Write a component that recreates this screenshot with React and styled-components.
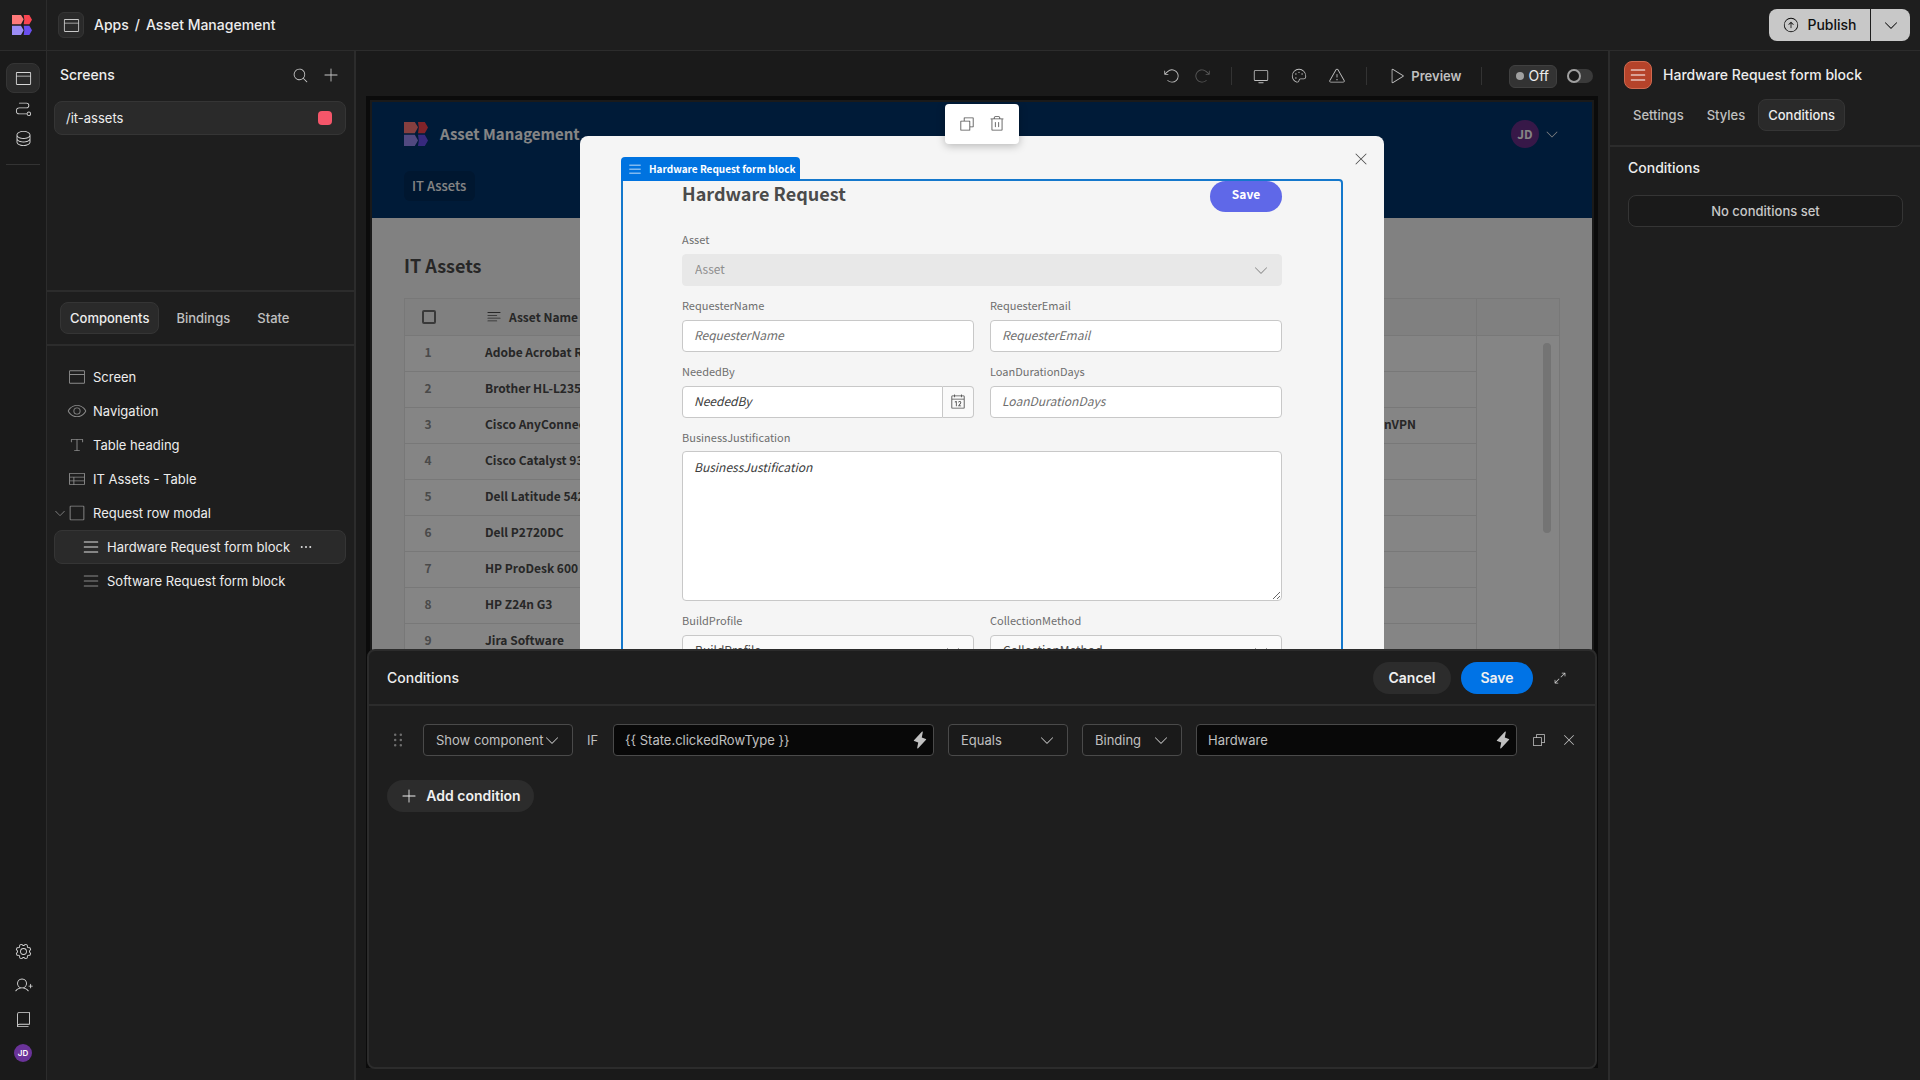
import { useState } from 'react'
import styled, { createGlobalStyle } from 'styled-components'
import {
   PiArrowClockwiseLight,
   PiArrowCircleUpLight,
   PiArrowCounterClockwiseLight,
   PiArrowsOutSimpleLight,
   PiBookLight,
   PiBrowserLight,
   PiCalendarLight,
   PiCaretDownLight,
   PiCopyLight,
   PiDatabaseLight,
   PiDotsSixVerticalBold,
   PiDotsThreeBold,
   PiEyeLight,
   PiGearLight,
   PiLightningFill,
   PiListLight,
   PiMagnifyingGlassLight,
   PiMonitorLight,
   PiPaletteLight,
   PiPathLight,
   PiPlayLight,
   PiPlusLight,
   PiSquareLight,
   PiTableLight,
   PiTextAlignLeftLight,
   PiTextTLight,
   PiTrashLight,
   PiUserPlusLight,
   PiWarningLight,
   PiXLight,
} from 'react-icons/pi'

const GlobalStyle = createGlobalStyle`
*, *::before { box-sizing: border-box; }
body {
   margin: 0;
   background: #1a1a1a;
   color: #ededed;
   font-family: Inter, sans-serif;
   font-size: 13px;
   line-height: 20px;
   overflow: hidden;
}
h1, h2, h3, p, ul { margin: 0; padding: 0; }
ul { list-style: none; }
button, input, select, textarea { font: inherit; color: inherit; }
button {
   border: 0;
   padding: 0;
   background: none;
   cursor: pointer;
}
svg { display: block; flex: none; }
`

/* ---------- shell ---------- */

const Page = styled.div`
   display: grid;
   grid-template-columns: 47px 309px 1fr 312px;
   grid-template-rows: 51px 1fr;
   height: 100vh;
`
const LogoCell = styled.div`
   display: flex;
   align-items: center;
   padding-left: 12px;
   background: #1e1e1e;
   border-right: 1px solid #2c2c2c;
   border-bottom: 1px solid #2c2c2c;
`
const TopBar = styled.header`
   grid-column: 2 / -1;
   display: flex;
   align-items: center;
   justify-content: space-between;
   padding: 0 10px 0 11px;
   background: #1e1e1e;
   border-bottom: 1px solid #2c2c2c;
`
const Breadcrumbs = styled.nav`
   display: flex;
   align-items: center;
   font-size: 14px;
   font-weight: 500;
   a {
      color: #ededed;
      text-decoration: none;
   }
   span { margin: 0 6px; }
`
const AppIcon = styled.div`
   display: flex;
   align-items: center;
   justify-content: center;
   width: 26px;
   height: 26px;
   margin-right: 10px;
   color: #c8c8c8;
   background: #2a2a2a;
   border: 1px solid #353535;
   border-radius: 6px;
`
const PublishGroup = styled.div`
   display: flex;
   gap: 1px;
   height: 32px;
   border-radius: 8px;
   overflow: hidden;
`
const PublishButton = styled.button`
   display: flex;
   align-items: center;
   justify-content: center;
   gap: 7px;
   width: ${(p) => (p.$narrow ? '39px' : '101px')};
   color: #101010;
   background: #c8c8c8;
   font-size: 14px;
   font-weight: 500;
`
const Rail = styled.nav`
   display: flex;
   flex-direction: column;
   align-items: center;
   padding: 12px 0 10px;
   border-right: 1px solid #2c2c2c;
`
const RailButton = styled.button`
   display: flex;
   align-items: center;
   justify-content: center;
   width: 34px;
   height: ${(p) => (p.$tall ? '34px' : '30px')};
   color: #d8d8d8;
   border-radius: 8px;
   border: 1px solid ${(p) => (p.$active ? '#353535' : 'transparent')};
   background: ${(p) => (p.$active ? '#2a2a2a' : 'none')};
`
const RailLine = styled.hr`
   width: 34px;
   height: 1px;
   margin: 11px 0 auto;
   border: 0;
   background: #333333;
`
const RailAvatar = styled.span`
   width: 18px;
   height: 18px;
   border-radius: 50%;
   background: #6a3399;
   color: #ffffff;
   font-size: 8px;
   font-weight: 600;
   line-height: 18px;
   text-align: center;
`

/* ---------- left and right panels ---------- */

const Panel = styled.aside`
   background: #1e1e1e;
   border-left: ${(p) => (p.$side === 'right' ? '2px solid #2c2c2c' : '0')};
   border-right: ${(p) => (p.$side === 'left' ? '2px solid #2c2c2c' : '0')};
`
const ScreensSection = styled.section`
   height: 241px;
   padding: 0 8px 0 7px;
   border-bottom: 2px solid #2c2c2c;
`
const ScreensHead = styled.div`
   display: flex;
   align-items: center;
   height: 48px;
   margin-bottom: 2px;
   padding: 0 6px;
   gap: 13px;
   color: #b0b0b0;
`
const PanelTitle = styled.h3`
   flex: 1;
   color: #ededed;
   font-size: 14px;
   font-weight: 500;
`
const ScreenRow = styled.button`
   display: flex;
   align-items: center;
   justify-content: space-between;
   width: 100%;
   height: 34px;
   padding: 0 13px 0 11px;
   background: #2a2a2a;
   border: 1px solid #353535;
   border-radius: 8px;
`
const RoleDot = styled.span`
   width: 14px;
   height: 14px;
   border-radius: 4px;
   background: #f5566a;
`
const Tabs = styled.div`
   display: flex;
   gap: ${(p) => p.$gap};
   padding: ${(p) => p.$pad};
   border-bottom: 2px solid #2c2c2c;
`
const Tab = styled.button`
   height: 32px;
   padding: 0 9px;
   font-weight: 500;
   color: ${(p) => (p.$active ? '#ededed' : '#c0c0c0')};
   background: ${(p) => (p.$active ? '#2a2a2a' : 'none')};
   border: 1px solid ${(p) => (p.$active ? '#353535' : 'transparent')};
   border-radius: 8px;
`
const Tree = styled.ul`
   padding: 14px 8px 14px 7px;
`
const TreeItem = styled.li`
   display: flex;
   align-items: center;
   height: 34px;
   padding-left: ${(p) => (p.$child ? '26px' : '12px')};
   border: 1px solid ${(p) => (p.$active ? '#353535' : 'transparent')};
   border-radius: 8px;
   background: ${(p) => (p.$active ? '#2a2a2a' : 'none')};
   color: ${(p) => (p.$active ? '#e0e0e0' : '#8a8a8a')};
   .caret { margin-left: -14px; }
   .more { margin-left: 8px; }
   button {
      margin-left: 6px;
      color: #ededed;
   }
`
const ComponentHead = styled.div`
   display: flex;
   align-items: center;
   gap: 11px;
   padding: 10px 14px;
   font-size: 14px;
   font-weight: 500;
`
const ComponentIcon = styled.div`
   display: flex;
   align-items: center;
   justify-content: center;
   width: 28px;
   height: 28px;
   border-radius: 8px;
   border: 1px solid #d0694f;
   background: #b5432a;
   color: #ffffff;
`
const ConditionsPane = styled.section`
   padding: 11px 17px 0 18px;
`
const OutlineButton = styled.button`
   width: 100%;
   height: 32px;
   margin-top: 17px;
   border: 1px solid #353535;
   border-radius: 8px;
   background: #1a1a1a;
   color: #c8c8c8;
   font-weight: 500;
`

/* ---------- canvas ---------- */

const Canvas = styled.main`
   position: relative;
   display: flex;
   flex-direction: column;
   min-width: 0;
   min-height: 0;
   padding: 0 10px 12px;
`
const Toolbar = styled.div`
   display: flex;
   align-items: center;
   justify-content: flex-end;
   height: 50px;
   margin-bottom: -5px;
   padding-right: 5px;
   color: #c0c0c0;
`
const ToolButton = styled.button`
   display: flex;
   align-items: center;
   gap: 6px;
   margin-right: ${(p) => p.$space};
   font-weight: 600;
   color: ${(p) => (p.disabled ? '#5a5a5a' : '#c0c0c0')};
`
const ToolLine = styled.span`
   width: 1px;
   height: 18px;
   margin-right: ${(p) => p.$space};
   background: #333333;
`
const OffPill = styled.span`
   display: flex;
   align-items: center;
   gap: 4px;
   height: 23px;
   margin-right: 10px;
   padding: 0 7px 0 6px;
   border: 1px solid #404040;
   border-radius: 6px;
   background: #333333;
   color: #ededed;
   font-size: 14px;
   &::before {
      content: '';
      width: 8px;
      height: 8px;
      border-radius: 50%;
      background: #a0a0a0;
   }
`
const Switch = styled.input`
   appearance: none;
   display: flex;
   align-items: center;
   width: 26px;
   height: 14px;
   margin: 0;
   border-radius: 7px;
   background: #3a3a3a;
   &::before {
      content: '';
      width: 14px;
      height: 14px;
      border: 2px solid #a0a0a0;
      border-radius: 50%;
      background: #1a1a1a;
   }
`
const Frame = styled.div`
   flex: 1;
   min-height: 0;
   border: 4px solid #0b0b0b;
   padding: 2px;
   overflow: hidden;
`
const Preview = styled.div`
   position: relative;
   height: 100%;
   overflow: hidden;
   background: #f7f7f7;
   color: #4b4b4b;
   font-family: 'Noto Sans CJK JP', 'Noto Sans CJK SC', sans-serif;
   font-size: 12px;
   line-height: 20px;
`
const AppHeader = styled.div`
   height: 116px;
   padding: 20px 32px 0;
   background: #00346c;
   color: #ffffff;
`
const AppHeaderRow = styled.div`
   display: flex;
   align-items: center;
   gap: 12px;
   height: 24px;
   svg:last-child { margin-left: -7px; }
`
const AppTitle = styled.h1`
   flex: 1;
   font-size: 15px;
   font-weight: 700;
`
const UserAvatar = styled.span`
   width: 28px;
   height: 28px;
   border-radius: 50%;
   background: #6a2f8a;
   font-size: 12px;
   font-weight: 700;
   line-height: 28px;
   text-align: center;
`
const NavLink = styled.a`
   display: inline-block;
   margin-top: 25px;
   padding: 5px 9px 5px 8px;
   border-radius: 6px;
   background: #002c5c;
   color: #ffffff;
   font-size: 13px;
   font-weight: 500;
   text-decoration: none;
`
const AppBody = styled.div`
   padding: 35px 32px;
`
const Heading = styled.h2`
   color: #4b4b4b;
   font-size: 18px;
   font-weight: 700;
   line-height: 24px;
`
const GridWrap = styled.div`
   position: relative;
   margin-top: 21px;
   border: 1px solid #e6e6e6;
`
const DataTable = styled.table`
   width: 100%;
   table-layout: fixed;
   border-collapse: collapse;
   color: #4b4b4b;
   font-size: 12px;
   font-weight: 600;
   background: #ffffff;
   th, td {
      height: 36px;
      padding: 0 16px 2px;
      border-bottom: 1px solid #e6e6e6;
      text-align: left;
      white-space: nowrap;
      overflow: hidden;
   }
   th {
      padding-bottom: 0;
      background: #f5f5f5;
      font-weight: 600;
   }
   td:last-child { border-bottom: 0; }
   th:last-child, td:last-child { border-left: 1px solid #e6e6e6; }
   td:first-child {
      padding: 0 18px 2px 0;
      color: #8e8e8e;
      text-align: center;
   }
`
const ThInner = styled.span`
   display: flex;
   align-items: center;
   gap: 6px;
`
const RowCheck = styled.input`
   appearance: none;
   display: block;
   width: 14px;
   height: 14px;
   margin: 0 0 0 1px;
   border: 2px solid #6e6e6e;
   border-radius: 2px;
`
const ScrollThumb = styled.span`
   position: absolute;
   top: 44px;
   right: 8px;
   width: 8px;
   height: 190px;
   border-radius: 4px;
   background: #dedede;
`
const Overlay = styled.div`
   position: absolute;
   inset: 0;
   display: flex;
   justify-content: center;
   padding-top: 34px;
   background: rgba(0, 0, 0, 0.48);
`
const Modal = styled.div`
   position: relative;
   width: 804px;
   height: 1000px;
   padding: 43px 41px 0;
   border-radius: 8px;
   background: #f5f5f5;
`
const CloseButton = styled.button`
   position: absolute;
   top: 14px;
   right: 14px;
`
const Selected = styled.div`
   position: relative;
   height: 900px;
   padding: 0 59px;
   border: 2px solid #1478cc;
   border-radius: 0 4px 4px 4px;
`
const SelectedTag = styled.div`
   position: absolute;
   left: -2px;
   bottom: 100%;
   display: flex;
   align-items: center;
   gap: 6px;
   height: 24px;
   padding: 0 4px 0 6px;
   border-radius: 4px 4px 0 0;
   background: #0073e0;
   color: #ffffff;
   font-size: 10px;
   font-weight: 700;
`
const FloatingBar = styled.div`
   position: absolute;
   top: 2px;
   left: 47%;
   display: flex;
   align-items: center;
   justify-content: center;
   gap: 12px;
   width: 74px;
   height: 40px;
   border-radius: 4px;
   background: #ffffff;
   color: #505050;
   box-shadow: 0 2px 8px rgba(0, 0, 0, 0.25);
`
const FormHead = styled.div`
   display: flex;
   justify-content: space-between;
   height: 47px;
`
const FormSave = styled.button`
   width: 72px;
   height: 31px;
   padding-bottom: 6px;
   border-radius: 16px;
   background: #5f68e8;
   color: #ffffff;
   font-weight: 700;
`
const FormGrid = styled.form`
   display: grid;
   grid-template-columns: 1fr 1fr;
   column-gap: 16px;
`
const Field = styled.div`
   grid-column: ${(p) => (p.$wide ? '1 / -1' : 'auto')};
   padding-bottom: 8px;
   label {
      display: block;
      height: 26px;
      margin-bottom: ${(p) => (p.$tight ? '-1px' : '0')};
      padding-top: 1px;
      color: #6e6e6e;
      font-size: 11px;
      line-height: 20px;
   }
`
const TextBox = styled.input`
   width: 100%;
   height: 32px;
   padding: 0 11px 3px;
   border: 1px solid #c8c8c8;
   border-radius: 4px;
   background: #ffffff;
   font-style: italic;
   &::placeholder { color: ${(p) => (p.$dark ? '#3c3c3c' : '#6e6e6e')}; opacity: 1; }
`
const TextArea = styled.textarea`
   display: block;
   width: 100%;
   height: 150px;
   padding: 5px 11px;
   border: 1px solid #c8c8c8;
   border-radius: 4px;
   background: #ffffff;
   font-style: italic;
   resize: vertical;
   &::placeholder { color: #3c3c3c; opacity: 1; }
`
const DateBox = styled.div`
   display: flex;
   input {
      flex: 1;
      min-width: 0;
      border-radius: 4px 0 0 4px;
   }
   button {
      display: flex;
      align-items: center;
      justify-content: center;
      width: 31px;
      border: 1px solid #c8c8c8;
      border-left: 0;
      border-radius: 0 4px 4px 0;
      background: #fafafa;
   }
`
const SelectBox = styled.div`
   display: grid;
   flex: none;
   width: ${(p) => p.$width || '100%'};
   align-items: center;
   select, svg { grid-area: 1 / 1; }
   svg {
      justify-self: end;
      margin-right: 12px;
      color: ${(p) => (p.$off ? '#8e8e8e' : 'inherit')};
      pointer-events: none;
   }
   select {
      appearance: none;
      width: 100%;
      height: 32px;
      padding: ${(p) => (p.$dark ? '0 12px' : '0 12px 3px')};
      border: 1px solid ${(p) => (p.$dark ? '#4a4a4a' : '#c8c8c8')};
      border-radius: 4px;
      background: ${(p) => (p.$dark ? '#1a1a1a' : '#fafafa')};
      opacity: 1;
   }
   select:disabled {
      border-color: #e8e8e8;
      background: #e8e8e8;
      color: #8e8e8e;
   }
`

/* ---------- conditions drawer ---------- */

const Drawer = styled.section`
   position: absolute;
   left: 11px;
   right: 11px;
   bottom: 11px;
   height: 420px;
   border: 2px solid #2c2c2c;
   border-radius: 8px;
   background: #1e1e1e;
`
const DrawerHead = styled.div`
   display: flex;
   align-items: center;
   gap: 10px;
   height: 55px;
   padding: 0 18px;
   border-bottom: 2px solid #2c2c2c;
`
const PillButton = styled.button`
   display: flex;
   align-items: center;
   justify-content: center;
   gap: 8px;
   width: ${(p) => p.$width};
   height: 32px;
   border-radius: 16px;
   background: ${(p) => (p.$primary ? '#0073e6' : '#2c2c2c')};
   color: #f0f0f0;
   font-size: 14px;
   font-weight: 600;
`
const IconButton = styled.button`
   display: flex;
   align-items: center;
   justify-content: center;
   width: ${(p) => p.$width};
   color: #c8c8c8;
`
const DrawerBody = styled.div`
   display: grid;
   gap: 24px;
   padding: 18px;
`
const ConditionRow = styled.div`
   display: flex;
   align-items: center;
   gap: 14px;
   color: #c0c0c0;
   & > span { width: 12px; }
`
const BindingBox = styled.div`
   display: flex;
   flex: 1;
   align-items: center;
   min-width: 0;
   height: 32px;
   padding: 0 4px 0 11px;
   border: 1px solid #4a4a4a;
   border-radius: 4px;
   background: #080808;
   input {
      flex: 1;
      min-width: 0;
      padding: 0;
      border: 0;
      background: none;
      outline: 0;
   }
`

const Logo = ({ size }) => (
   <svg width={size} height={size} viewBox="0 0 60 60">
      <path d="M0 0h27l8 13-8 15H0z" fill="#ff7a7a" />
      <path d="M35 0h17l8 14-8 14H35l2-14z" fill="#f94450" />
      <path d="M0 32h27l8 14-8 14H0z" fill="#9b8cf5" />
      <path d="M35 32h17l8 14-8 14H35l2-14z" fill="#6a4ff0" />
   </svg>
)

const tree = [
   { label: 'Screen', icon: PiBrowserLight },
   { label: 'Navigation', icon: PiEyeLight },
   { label: 'Table heading', icon: PiTextTLight },
   { label: 'IT Assets - Table', icon: PiTableLight },
   { label: 'Request row modal', icon: PiSquareLight, open: true },
   { label: 'Hardware Request form block', icon: PiListLight, child: true, active: true },
   { label: 'Software Request form block', icon: PiListLight, child: true },
]

const assets = [
   ['Adobe Acrobat Reader', ''],
   ['Brother HL-L2350DW', ''],
   ['Cisco AnyConnect', 'OpenVPN'],
   ['Cisco Catalyst 9300', ''],
   ['Dell Latitude 5420', ''],
   ['Dell P2720DC', ''],
   ['HP ProDesk 600 G6', ''],
   ['HP Z24n G3', ''],
   ['Jira Software', ''],
]

const SelectField = ({ id, label, children, ...rest }) => (
   <SelectBox {...rest}>
      <select id={id} aria-label={label} disabled={rest.$off}>
         <option>{children}</option>
      </select>
      <PiCaretDownLight size={18} />
   </SelectBox>
)

const LeftPanel = () => (
   <Panel $side="left">
      <ScreensSection>
         <ScreensHead>
            <PanelTitle>Screens</PanelTitle>
            <IconButton $width="18px" aria-label="Search"><PiMagnifyingGlassLight size={17} /></IconButton>
            <IconButton $width="18px" aria-label="Add screen"><PiPlusLight size={18} /></IconButton>
         </ScreensHead>
         <ScreenRow>/it-assets<RoleDot /></ScreenRow>
      </ScreensSection>
      <Tabs $gap="7px" $pad="10px 13px">
         <Tab $active>Components</Tab>
         <Tab>Bindings</Tab>
         <Tab>State</Tab>
      </Tabs>
      <Tree>
         {tree.map(({ label, icon: Icon, open, child, active }) => (
            <TreeItem key={label} $child={child} $active={active}>
               {open && <PiCaretDownLight className="caret" size={14} />}
               <Icon size={20} />
               <button>{label}</button>
               {active && <PiDotsThreeBold className="more" size={16} />}
            </TreeItem>
         ))}
      </Tree>
   </Panel>
)

const AppPreview = () => (
   <Preview>
      <AppHeader>
         <AppHeaderRow>
            <Logo size={24} />
            <AppTitle>Asset Management</AppTitle>
            <UserAvatar>JD</UserAvatar>
            <PiCaretDownLight size={16} />
         </AppHeaderRow>
         <NavLink href="#it-assets">IT Assets</NavLink>
      </AppHeader>
      <AppBody>
         <Heading>IT Assets</Heading>
         <GridWrap>
            <DataTable>
               <colgroup>
                  <col width="64" />
                  <col width="220" />
                  <col />
                  <col width="132" />
                  <col width="83" />
               </colgroup>
               <thead>
                  <tr>
                     <th><RowCheck type="checkbox" aria-label="Select all" /></th>
                     <th><ThInner><PiTextAlignLeftLight size={18} />Asset Name</ThInner></th>
                     <th />
                     <th />
                     <th />
                  </tr>
               </thead>
               <tbody>
                  {assets.map(([name, note], i) => (
                     <tr key={name}>
                        <td>{i + 1}</td>
                        <td>{name}</td>
                        <td />
                        <td>{note}</td>
                        <td />
                     </tr>
                  ))}
               </tbody>
            </DataTable>
            <ScrollThumb />
         </GridWrap>
      </AppBody>
      <Overlay>
         <Modal>
            <CloseButton aria-label="Close"><PiXLight size={18} /></CloseButton>
            <Selected>
               <SelectedTag><PiListLight size={16} />Hardware Request form block</SelectedTag>
               <FormHead>
                  <Heading>Hardware Request</Heading>
                  <FormSave>Save</FormSave>
               </FormHead>
               <FormGrid>
                  <Field $wide>
                     <label htmlFor="asset">Asset</label>
                     <SelectField id="asset" $off>Asset</SelectField>
                  </Field>
                  <Field>
                     <label htmlFor="name">RequesterName</label>
                     <TextBox id="name" placeholder="RequesterName" />
                  </Field>
                  <Field>
                     <label htmlFor="email">RequesterEmail</label>
                     <TextBox id="email" placeholder="RequesterEmail" />
                  </Field>
                  <Field>
                     <label htmlFor="needed">NeededBy</label>
                     <DateBox>
                        <TextBox id="needed" placeholder="NeededBy" $dark />
                        <button type="button" aria-label="Pick a date"><PiCalendarLight size={18} /></button>
                     </DateBox>
                  </Field>
                  <Field>
                     <label htmlFor="loan">LoanDurationDays</label>
                     <TextBox id="loan" placeholder="LoanDurationDays" />
                  </Field>
                  <Field $wide $tight>
                     <label htmlFor="why">BusinessJustification</label>
                     <TextArea id="why" placeholder="BusinessJustification" />
                  </Field>
                  <Field>
                     <label htmlFor="build">BuildProfile</label>
                     <SelectField id="build">BuildProfile</SelectField>
                  </Field>
                  <Field>
                     <label htmlFor="collect">CollectionMethod</label>
                     <SelectField id="collect">CollectionMethod</SelectField>
                  </Field>
               </FormGrid>
            </Selected>
         </Modal>
      </Overlay>
      <FloatingBar>
         <button aria-label="Duplicate"><PiCopyLight size={18} /></button>
         <button aria-label="Delete"><PiTrashLight size={18} /></button>
      </FloatingBar>
   </Preview>
)

const ConditionsDrawer = () => {
   const [left, setLeft] = useState('{{ State.clickedRowType }}')
   const [right, setRight] = useState('Hardware')

   return (
      <Drawer>
         <DrawerHead>
            <PanelTitle>Conditions</PanelTitle>
            <PillButton $width="78px">Cancel</PillButton>
            <PillButton $width="72px" $primary>Save</PillButton>
            <IconButton $width="34px" aria-label="Expand"><PiArrowsOutSimpleLight size={16} /></IconButton>
         </DrawerHead>
         <DrawerBody>
            <ConditionRow>
               <IconButton $width="22px" aria-label="Reorder"><PiDotsSixVerticalBold size={20} color="#6e6e6e" /></IconButton>
               <SelectField $dark $width="150px" label="Action">Show component</SelectField>
               <span>IF</span>
               <BindingBox>
                  <input aria-label="Value" value={left} onChange={(e) => setLeft(e.target.value)} />
                  <PiLightningFill size={18} />
               </BindingBox>
               <SelectField $dark $width="120px" label="Operator">Equals</SelectField>
               <SelectField $dark $width="100px" label="Type">Binding</SelectField>
               <BindingBox>
                  <input aria-label="Reference value" value={right} onChange={(e) => setRight(e.target.value)} />
                  <PiLightningFill size={18} />
               </BindingBox>
               <IconButton $width="16px" aria-label="Duplicate condition"><PiCopyLight size={16} /></IconButton>
               <IconButton $width="16px" aria-label="Remove condition"><PiXLight size={16} /></IconButton>
            </ConditionRow>
            <PillButton $width="147px"><PiPlusLight size={18} />Add condition</PillButton>
         </DrawerBody>
      </Drawer>
   )
}

const App = function () {
   return (
      <>
         <GlobalStyle />
         <Page>
            <LogoCell><Logo size={20} /></LogoCell>
            <TopBar>
               <Breadcrumbs>
                  <AppIcon><PiBrowserLight size={19} /></AppIcon>
                  <a href="#apps">Apps</a>
                  <span>/</span>
                  <a href="#app">Asset Management</a>
               </Breadcrumbs>
               <PublishGroup>
                  <PublishButton><PiArrowCircleUpLight size={18} />Publish</PublishButton>
                  <PublishButton $narrow aria-label="More publish options"><PiCaretDownLight size={18} /></PublishButton>
               </PublishGroup>
            </TopBar>

            <Rail>
               <RailButton $active aria-label="Design"><PiBrowserLight size={19} /></RailButton>
               <RailButton aria-label="Automations"><PiPathLight size={19} /></RailButton>
               <RailButton aria-label="Data"><PiDatabaseLight size={19} /></RailButton>
               <RailLine />
               <RailButton $tall aria-label="Settings"><PiGearLight size={19} /></RailButton>
               <RailButton $tall aria-label="Invite user"><PiUserPlusLight size={19} /></RailButton>
               <RailButton $tall aria-label="Docs"><PiBookLight size={19} /></RailButton>
               <RailButton $tall aria-label="Account"><RailAvatar>JD</RailAvatar></RailButton>
            </Rail>

            <LeftPanel />

            <Canvas>
               <Toolbar>
                  <ToolButton $space="12px" aria-label="Undo"><PiArrowCounterClockwiseLight size={18} /></ToolButton>
                  <ToolButton $space="20px" aria-label="Redo" disabled><PiArrowClockwiseLight size={18} /></ToolButton>
                  <ToolLine $space="20px" />
                  <ToolButton $space="20px" aria-label="Screen size"><PiMonitorLight size={18} /></ToolButton>
                  <ToolButton $space="20px" aria-label="Theme"><PiPaletteLight size={18} /></ToolButton>
                  <ToolButton $space="20px" aria-label="Errors"><PiWarningLight size={18} /></ToolButton>
                  <ToolLine $space="20px" />
                  <ToolButton $space="20px"><PiPlayLight size={18} />Preview</ToolButton>
                  <ToolLine $space="27px" />
                  <OffPill>Off</OffPill>
                  <Switch type="checkbox" aria-label="Live preview" />
               </Toolbar>
               <Frame>
                  <AppPreview />
               </Frame>
               <ConditionsDrawer />
            </Canvas>

            <Panel $side="right">
               <ComponentHead>
                  <ComponentIcon><PiListLight size={20} /></ComponentIcon>
                  Hardware Request form block
               </ComponentHead>
               <Tabs $gap="3px" $pad="0 13px 14px">
                  <Tab>Settings</Tab>
                  <Tab>Styles</Tab>
                  <Tab $active>Conditions</Tab>
               </Tabs>
               <ConditionsPane>
                  <PanelTitle>Conditions</PanelTitle>
                  <OutlineButton>No conditions set</OutlineButton>
               </ConditionsPane>
            </Panel>
         </Page>
      </>
   )
}
export default App
